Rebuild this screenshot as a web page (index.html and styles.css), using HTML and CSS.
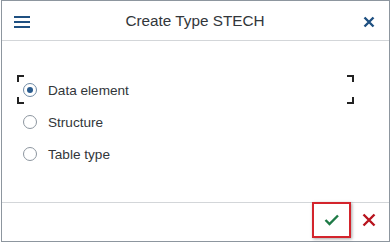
FILE: index.html
```html
<!DOCTYPE html>
<html lang="en">
<head>
    <meta charset="UTF-8">
    <meta name="viewport" content="width=device-width, initial-scale=1.0">
    <title>Create Type STECH</title>
    <link rel="stylesheet" href="styles.css">
</head>
<body>
    <div class="dialog">
        <div class="header">
            <span class="menu-icon"><i></i><i></i><i></i></span>
            <h1 class="title">Create Type STECH</h1>
            <svg class="close-icon" width="12" height="12" viewBox="0 0 12 12">
                <path d="M1.5 1.5 L10.5 10.5 M10.5 1.5 L1.5 10.5" stroke="#1f5081" stroke-width="2.4" fill="none"/>
            </svg>
        </div>

        <div class="content">
            <div class="option focused">
                <span class="radio checked"></span>
                <span class="label">Data element</span>
                <span class="corner tl"></span>
                <span class="corner tr"></span>
                <span class="corner bl"></span>
                <span class="corner br"></span>
            </div>
            <div class="option">
                <span class="radio"></span>
                <span class="label">Structure</span>
            </div>
            <div class="option">
                <span class="radio"></span>
                <span class="label">Table type</span>
            </div>
        </div>

        <div class="footer">
            <button class="btn btn-ok">
                <svg width="16" height="12" viewBox="0 0 16 12">
                    <path d="M1.5 6 L5.5 10 L14 1.5" stroke="#1e7a46" stroke-width="2.4" fill="none"/>
                </svg>
            </button>
            <button class="btn btn-cancel">
                <svg width="14" height="14" viewBox="0 0 14 14">
                    <path d="M1.5 1.5 L12.5 12.5 M12.5 1.5 L1.5 12.5" stroke="#b8141e" stroke-width="2.4" fill="none"/>
                </svg>
            </button>
        </div>
    </div>
</body>
</html>
```

FILE: styles.css
```css
body {
    margin: 0;
    padding: 0;
    background: #fff;
    font-family: "Liberation Sans", Arial, sans-serif;
    color: #32363a;
}
.dialog {
    width: 387px;
    height: 240px;
    margin-left: 1px;
    border: 1px solid #8d969f;
    display: flex;
    flex-direction: column;
    background: #fff;
}
.header {
    height: 39px;
    border-bottom: 1px solid #d3d6d9;
    display: flex;
    align-items: center;
    padding: 0 14px 0 12px;
}
.menu-icon {
    width: 16px;
    height: 12px;
    display: flex;
    flex-direction: column;
    justify-content: space-between;
    margin-top: 2px;
}
.menu-icon i {
    display: block;
    height: 2px;
    background: #1f5081;
}
.title {
    flex: 1;
    margin: 0;
    text-align: center;
    font-size: 15.3px;
    font-weight: normal;
    color: #32363a;
    padding-right: 3px;
}
.close-icon {
    display: block;
    margin-top: 3px;
}
.content {
    flex: 1;
    padding: 33px 35px 0 15px;
}
.option {
    position: relative;
    height: 32px;
    display: flex;
    align-items: center;
    padding-left: 6px;
}
.radio {
    width: 12px;
    height: 12px;
    border: 1px solid #8d969f;
    border-radius: 50%;
    display: flex;
    align-items: center;
    justify-content: center;
    margin-right: 11px;
    background: #fff;
}
.radio.checked {
    border-color: #6f8aa5;
}
.radio.checked::after {
    content: "";
    width: 6px;
    height: 6px;
    border-radius: 50%;
    background: #285b8e;
}
.label {
    font-size: 13.6px;
    color: #32363a;
}
.corner {
    position: absolute;
    width: 5px;
    height: 5px;
    border: 0 solid #222;
}
.corner.tl { top: 1px; left: 0; border-top-width: 2px; border-left-width: 2px; }
.corner.tr { top: 1px; right: 0; border-top-width: 2px; border-right-width: 2px; }
.corner.bl { bottom: 2px; left: 0; border-bottom-width: 2px; border-left-width: 2px; }
.corner.br { bottom: 2px; right: 0; border-bottom-width: 2px; border-right-width: 2px; }
.footer {
    height: 38px;
    border-top: 1px solid #d3d6d9;
    display: flex;
    justify-content: flex-end;
    align-items: flex-start;
    padding-right: 2px;
}
.btn {
    background: none;
    border: none;
    padding: 0;
    display: flex;
    align-items: center;
    justify-content: center;
    cursor: pointer;
}
.btn-ok {
    width: 39px;
    height: 36px;
    margin-top: -1px;
    border: 2px solid #d3242c;
    box-shadow: 1px 1px 3px rgba(0, 0, 0, 0.35);
}
.btn-cancel {
    width: 36px;
    height: 34px;
}
```
